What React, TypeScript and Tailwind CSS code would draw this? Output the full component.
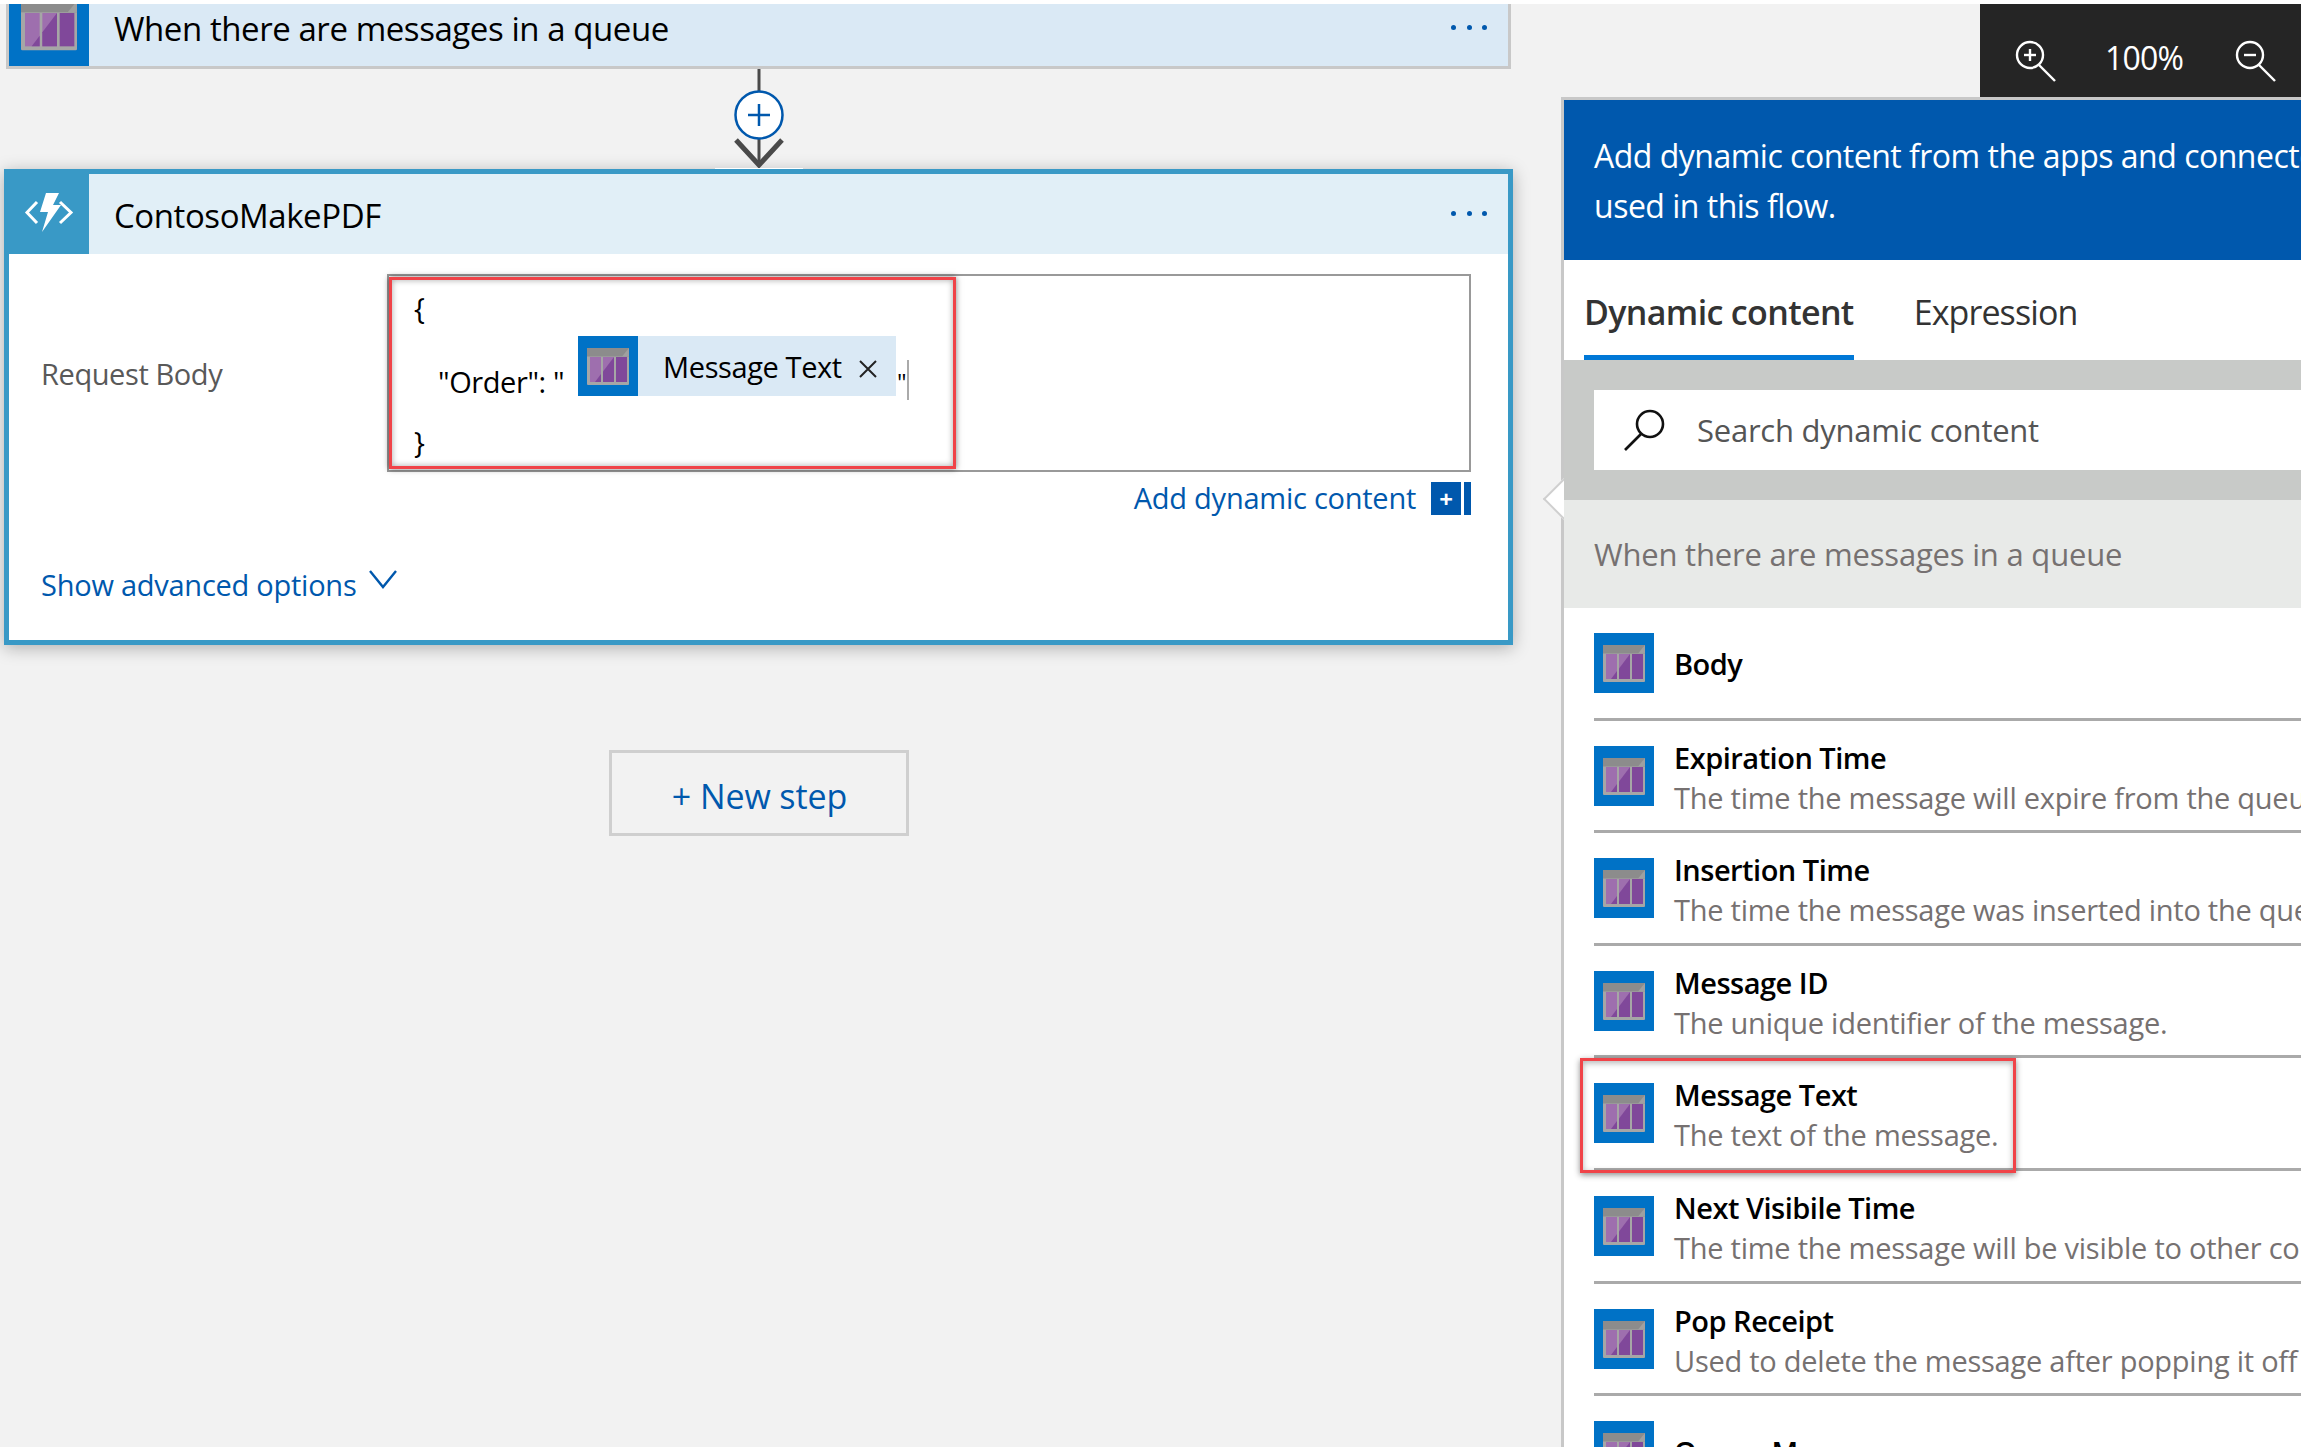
import React from "react";

const font = { fontFamily: '"Open Sans", "Noto Sans", sans-serif' };

function QueueIcon({ className = "w-[60px] h-[60px]", viewBox = "0 0 60 60" }: { className?: string; viewBox?: string }) {
  return (
    <svg className={`${className} shrink-0 bg-[#0072c6]`} viewBox={viewBox} preserveAspectRatio="none">
      <rect x="9" y="12" width="42" height="37" rx="1" fill="#a6a6a6" />
      <rect x="9" y="12" width="42" height="8.5" fill="#8c8c8c" />
      <rect x="12" y="21" width="11" height="25" fill="#9e6fae" />
      <rect x="25" y="21" width="11" height="25" fill="#9e6fae" />
      <rect x="38" y="21" width="11" height="25" fill="#80489a" />
      <path d="M17 46 L23 38 V46 Z" fill="#80489a" />
      <path d="M25 35.5 L36 21 V46 H25 Z" fill="#80489a" />
      <path d="M44 20.5 L51 12 V20.5 Z" fill="#a0a0a0" />
    </svg>
  );
}

function Dots({ className = "" }: { className?: string }) {
  return (
    <div className={`flex gap-[10.5px] ${className}`}>
      <span className="w-[5px] h-[5px] rounded-full bg-[#0058ad]" />
      <span className="w-[5px] h-[5px] rounded-full bg-[#0058ad]" />
      <span className="w-[5px] h-[5px] rounded-full bg-[#0058ad]" />
    </div>
  );
}

function Magnifier({ minus }: { minus?: boolean }) {
  return (
    <svg width="42" height="42" viewBox="0 0 42 42" fill="none" stroke="#fff" className="shrink-0 mt-[20px]">
      <circle cx="15" cy="15" r="13" strokeWidth="2.4" />
      <path d="M24 25 L40 41" strokeWidth="2.4" />
      <path d="M9 15 H21" strokeWidth="2.4" />
      {!minus && <path d="M15 9 V21" strokeWidth="2.4" />}
    </svg>
  );
}

const rows: { t: string; s?: string }[] = [
  { t: "Body" },
  { t: "Expiration Time", s: "The time the message will expire from the queue." },
  { t: "Insertion Time", s: "The time the message was inserted into the queue." },
  { t: "Message ID", s: "The unique identifier of the message." },
  { t: "Message Text", s: "The text of the message." },
  { t: "Next Visibile Time", s: "The time the message will be visible to other consumers." },
  { t: "Pop Receipt", s: "Used to delete the message after popping it off the queue." },
  { t: "Queue Message" },
];

export default function App() {
  return (
    <div style={font} className="w-[2301px] h-[1447px] overflow-hidden bg-[#f2f2f2] border-t-4 border-white flex">
      {/* Canvas */}
      <div className="w-[1561px] shrink-0 pl-[4px]">
        <div className="w-[1509px] flex flex-col">
          <div className="mx-[2px] h-[65px] border-x-[3px] border-b-[3px] border-[#c8c8c8] bg-[#dae9f5] flex items-center">
            <QueueIcon className="w-[80px] h-[62px]" viewBox="0 14.25 60 46.5" />
            <div className="ml-[25px] text-[33px] leading-[40px] tracking-[-0.43px] text-black -mt-[12px] flex-1">When there are messages in a queue</div>
            <Dots className="mr-[21px] -mt-[16px]" />
          </div>

          <div className="self-center h-[100px] relative w-[88px]">
            <svg width="88" height="100" viewBox="0 0 88 100" fill="none" className="block">
              <path d="M44 0 V22 M44 70 V97" stroke="#4a4a4a" strokeWidth="3" />
              <path d="M21 71 L44 96 L67 71" stroke="#4a4a4a" strokeWidth="5" />
              <path d="M0 99.5 H88" stroke="#fff" strokeWidth="1" />
              <circle cx="44" cy="46" r="23.5" fill="#fff" stroke="#0058ad" strokeWidth="2.5" />
              <path d="M33 46 H55 M44 35 V57" stroke="#0058ad" strokeWidth="2.5" />
            </svg>
          </div>

          <div className="h-[476px] border-[5px] border-[#3999c6] bg-white shadow-[0_3px_16px_rgba(0,0,0,0.28)]">
            <div className="h-[80px] bg-[#e1eff7] flex items-center">
              <svg width="80" height="80" viewBox="0 0 80 80" className="bg-[#3999c6] shrink-0">
                <path d="M37 19 H50 L44 31 H52 L33 58 L39 38 H31 Z" fill="#fff" />
                <path d="M28 28 L18 38.5 L28 49 M51 28 L62 38.5 L51 49" fill="none" stroke="#fff" strokeWidth="3" />
              </svg>
              <div className="ml-[25px] text-[33px] leading-[40px] tracking-[-0.43px] text-black flex-1 mt-[3px]">ContosoMakePDF</div>
              <Dots className="mr-[21px] -mt-[2px]" />
            </div>

            <div className="pt-[20px] pl-[32px] pr-[37px]">
              <div className="flex">
                <div className="w-[346px] shrink-0 flex items-center text-[29px] tracking-[-0.4px] text-[#595959] pt-[2px]">Request Body</div>
                <div className="relative w-[1084px] h-[198px] border-2 border-[#999] text-black text-[29px] leading-[40px] tracking-[-0.4px]">
                  <div className="pl-[25px] pt-[12px] h-[54px]">{"{"}</div>
                  <div className="flex pl-[49px] h-[60px] mt-[6px]">
                    <span className="mt-[26px] mr-[14px] whitespace-nowrap">"Order": "</span>
                    <div className="flex items-center h-[60px] w-[318px] bg-[#dae9f5]">
                      <QueueIcon />
                      <span className="ml-[25px] mt-[1px] whitespace-nowrap">Message Text</span>
                      <svg width="18" height="18" viewBox="0 0 18 18" className="ml-[17px] mt-[5px] shrink-0" fill="none" stroke="#222" strokeWidth="2">
                        <path d="M1 1 L17 17 M17 1 L1 17" />
                      </svg>
                    </div>
                    <span className="mt-[26px] ml-[1px] text-[24px]">"</span>
                    <span className="mt-[24px] ml-[1px] w-[2px] h-[40px] bg-[#aaa]" />
                  </div>
                  <div className="pl-[25px] mt-[26px]">{"}"}</div>
                  <div className="absolute left-0 top-px w-[567px] h-[192px] border-[3px] border-[#f04348] shadow-[0_0_6px_rgba(0,0,0,0.5),inset_0_0_6px_rgba(0,0,0,0.35)]" />
                </div>
              </div>

              <div className="flex justify-end items-center mt-[10px] h-[33px]">
                <span className="text-[29px] tracking-[-0.25px] text-[#0058ad] mr-[15px] whitespace-nowrap -mt-[1px]">Add dynamic content</span>
                <span className="w-[30px] h-[33px] bg-[#0058ad] flex items-center justify-center text-white text-[24px] font-bold leading-none">+</span>
                <span className="w-[7px] h-[33px] bg-[#0058ad] ml-[3px]" />
              </div>

              <div className="flex items-center mt-[52px] h-[36px]">
                <span className="text-[29px] tracking-[-0.25px] text-[#0058ad] whitespace-nowrap">Show advanced options</span>
                <svg width="30" height="20" viewBox="0 0 30 20" className="ml-[12px] -mt-[12px]" fill="none" stroke="#0058ad" strokeWidth="2.4">
                  <path d="M2 2 L15 18 L28 2" />
                </svg>
              </div>
            </div>
          </div>

          <div className="self-center mt-[105px] w-[300px] h-[86px] border-[3px] border-[#cfcfcf] flex items-center justify-center text-[34px] tracking-[-0.1px] text-[#0058ad] pt-[6px] pl-[2px]">
            + New step
          </div>
        </div>
      </div>

      {/* Right column */}
      <div className="flex-1 min-w-0 flex flex-col">
        <div className="h-[93px] flex justify-end shrink-0">
          <div className="w-[321px] bg-[#252525] flex items-center pl-[35px] text-white">
            <Magnifier />
            <span className="ml-[48px] mr-[52px] text-[32px] tracking-[-0.8px] mt-[15px]">100%</span>
            <Magnifier minus />
          </div>
        </div>

        <div className="relative flex-1 border-l-[3px] border-t-[3px] border-[#c8c8c8] bg-white">
          <div className="absolute -left-[15px] top-[384px] w-[30px] h-[30px] rotate-45 bg-white border-l-2 border-b-2 border-[#cfcfcf] z-10" />
          <div className="relative z-20 w-[737px] overflow-hidden">
            <div className="h-[160px] bg-[#0058ad] text-white text-[32px] leading-[50px] tracking-[-0.5px] pl-[30px] pt-[31px] whitespace-nowrap">
              <div>Add dynamic content from the apps and connectors</div>
              <div>used in this flow.</div>
            </div>
            <div className="h-[100px] bg-white flex pl-[20px] text-[34px] text-[#333]">
              <div className="h-full border-b-[5px] border-[#0078d7] font-semibold tracking-[-0.65px] pt-[29px] leading-[46px] whitespace-nowrap">Dynamic content</div>
              <div className="ml-[60px] pt-[29px] leading-[46px] tracking-[-0.9px]">Expression</div>
            </div>
            <div className="h-[140px] bg-[#c8cac8] pt-[30px] pl-[30px]">
              <div className="h-[80px] bg-white flex items-center pl-[30px]">
                <svg width="42" height="42" viewBox="0 0 42 42" fill="none" stroke="#111" strokeWidth="2.6" className="shrink-0">
                  <circle cx="26" cy="15" r="13" />
                  <path d="M17 25 L1 41" />
                </svg>
                <span className="ml-[31px] text-[31px] tracking-[-0.25px] text-[#555] whitespace-nowrap">Search dynamic content</span>
              </div>
            </div>
            <div className="h-[108px] bg-[#e8eae8] pl-[30px] flex items-center text-[31px] tracking-[-0.2px] text-[#767171] whitespace-nowrap">
              When there are messages in a queue
            </div>

            <div className="relative">
              {rows.map((r) => (
                <div key={r.t} className="ml-[30px] h-[112.6px] pt-[25px] border-b-[3px] border-[#aaa] flex whitespace-nowrap">
                  <QueueIcon />
                  <div className={`ml-[20px] ${r.s ? "-mt-[8px]" : "mt-[11px]"}`}>
                    <div className="text-[29px] leading-[40px] tracking-[-0.5px] font-semibold text-black">{r.t}</div>
                    {r.s && <div className="text-[29px] leading-[40px] tracking-[-0.25px] text-[#767171]">{r.s}</div>}
                  </div>
                </div>
              ))}
              <div className="absolute left-[16px] top-[450px] w-[436px] h-[115px] border-[3px] border-[#f04348] shadow-[0_2px_6px_rgba(0,0,0,0.45),inset_0_2px_6px_rgba(0,0,0,0.3)]" />
            </div>
          </div>
        </div>
      </div>
    </div>
  );
}
